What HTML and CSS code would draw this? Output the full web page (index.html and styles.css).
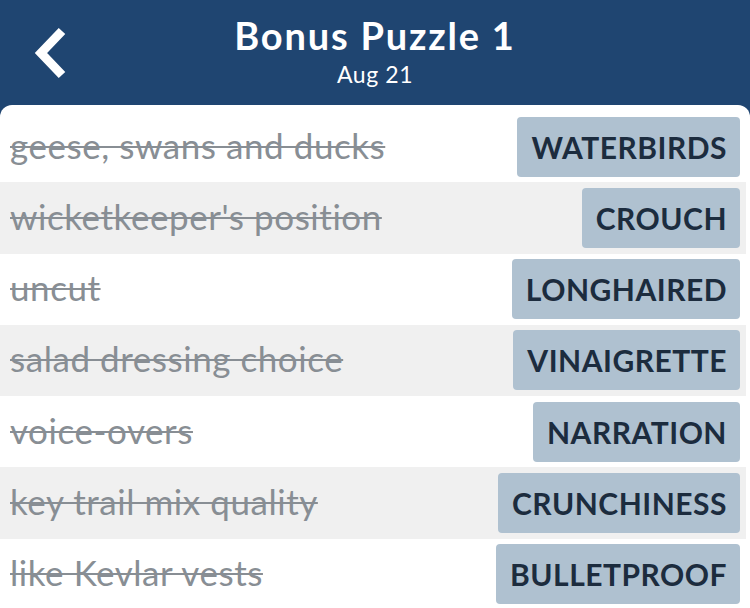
FILE: index.html
```
<!DOCTYPE html>
<html lang="en">
  <head>
    <meta charset="UTF-8" />
    <meta name="viewport" content="width=device-width, initial-scale=1.0" />
    <title>Bonus Puzzle 1</title>
    <link rel="stylesheet" href="styles.css">
  </head>
  <body>
    <header class="topbar">
      <a class="back" href="#">
        <svg width="34" height="52" viewBox="0 0 34 52">
          <path d="M29 4 L8 26 L29 48" fill="none" stroke="#fff" stroke-width="9" stroke-linejoin="miter" />
        </svg>
      </a>
      <div class="titles">
        <h1>Bonus Puzzle 1</h1>
        <div class="date">Aug 21</div>
      </div>
    </header>

    <div class="list">
      <div class="row">
        <span class="clue">geese, swans and ducks</span>
        <span class="answer">WATERBIRDS</span>
      </div>
      <div class="row alt">
        <span class="clue">wicketkeeper's position</span>
        <span class="answer">CROUCH</span>
      </div>
      <div class="row">
        <span class="clue">uncut</span>
        <span class="answer">LONGHAIRED</span>
      </div>
      <div class="row alt">
        <span class="clue">salad dressing choice</span>
        <span class="answer">VINAIGRETTE</span>
      </div>
      <div class="row">
        <span class="clue">voice-overs</span>
        <span class="answer">NARRATION</span>
      </div>
      <div class="row alt">
        <span class="clue">key trail mix quality</span>
        <span class="answer">CRUNCHINESS</span>
      </div>
      <div class="row">
        <span class="clue">like Kevlar vests</span>
        <span class="answer">BULLETPROOF</span>
      </div>
    </div>
  </body>
</html>
```

FILE: styles.css
```
body {
  margin: 0;
  font-family: Lato, "Open Sans", sans-serif;
  background: #1f4571;
  overflow: hidden;
}
.topbar {
  height: 105px;
  display: flex;
  align-items: center;
  justify-content: center;
  position: relative;
  color: #fff;
}
.back {
  position: absolute;
  left: 33px;
  top: 27px;
}
.back svg {
  display: block;
}
.titles {
  text-align: center;
  margin-top: -2px;
}
.titles h1 {
  margin: 0;
  font-size: 38px;
  font-weight: 700;
  letter-spacing: 1.8px;
  line-height: 44px;
}
.date {
  font-size: 23px;
  letter-spacing: 0.6px;
  line-height: 34px;
}
.list {
  background: #fff;
  border-radius: 12px 12px 0 0;
  padding-top: 6px;
  height: 520px;
}
.row {
  height: 71.25px;
  display: flex;
  align-items: center;
  justify-content: space-between;
  padding: 0 10px;
  margin-right: 4px;
  box-sizing: border-box;
}
.row.alt {
  background: #f0f0f0;
}
.clue {
  font-size: 35px;
  letter-spacing: 0.55px;
  color: #888e94;
  text-decoration: line-through;
  text-decoration-thickness: 2px;
  margin-top: -4px;
}
.answer {
  background: #afc1d0;
  color: #1c2c3e;
  font-size: 30px;
  font-weight: 700;
  letter-spacing: 0.5px;
  height: 60px;
  line-height: 60px;
  padding: 0 13px 0 14px;
  border-radius: 4px;
  margin-right: -4px;
}
```
